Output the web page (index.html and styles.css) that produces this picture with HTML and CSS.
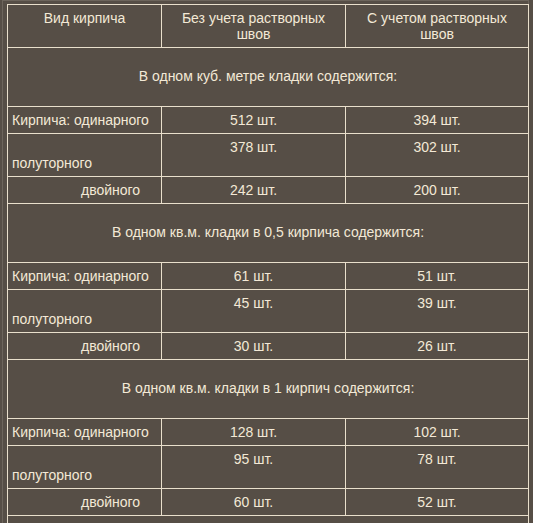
FILE: index.html
```html
<!DOCTYPE html>
<html lang="ru">
<head>
<meta charset="utf-8">
<title>Расход кирпича</title>
<link rel="stylesheet" href="styles.css">
</head>
<body>
<div class="frame">
<table class="bricks">
  <colgroup>
    <col class="c1">
    <col class="c2">
    <col class="c3">
  </colgroup>
  <tr class="head">
    <td>Вид кирпича</td>
    <td>Без учета растворных швов</td>
    <td>С учетом растворных швов</td>
  </tr>
  <tr><td class="section" colspan="3">В одном куб. метре кладки содержится:</td></tr>
  <tr><td class="label">Кирпича: одинарного</td><td>512 шт.</td><td>394 шт.</td></tr>
  <tr><td class="label"><br>полуторного</td><td>378 шт.</td><td>302 шт.</td></tr>
  <tr><td class="label indent">двойного</td><td>242 шт.</td><td>200 шт.</td></tr>

  <tr><td class="section" colspan="3">В одном кв.м. кладки в 0,5 кирпича содержится:</td></tr>
  <tr><td class="label">Кирпича: одинарного</td><td>61 шт.</td><td>51 шт.</td></tr>
  <tr><td class="label"><br>полуторного</td><td>45 шт.</td><td>39 шт.</td></tr>
  <tr><td class="label indent">двойного</td><td>30 шт.</td><td>26 шт.</td></tr>

  <tr><td class="section" colspan="3">В одном кв.м. кладки в 1 кирпич содержится:</td></tr>
  <tr><td class="label">Кирпича: одинарного</td><td>128 шт.</td><td>102 шт.</td></tr>
  <tr><td class="label"><br>полуторного</td><td>95 шт.</td><td>78 шт.</td></tr>
  <tr><td class="label indent">двойного</td><td>60 шт.</td><td>52 шт.</td></tr>

  <tr><td class="section" colspan="3">&nbsp;</td></tr>
</table>
</div>
</body>
</html>
```

FILE: styles.css
```css
html, body {
  margin: 0;
  padding: 0;
  background: #564e46;
}

body {
  font-family: "Liberation Sans", Arial, sans-serif;
  font-size: 14px;
  color: #f3e9d6;
}

.frame {
  margin-left: 2px;
  width: 527px;
  border-left: 1px solid #6d655c;
  border-top: 1px solid #6d655c;
  border-right: 1px solid #6d655c;
  padding: 3px 2px 0 4px;
  box-sizing: border-box;
}

.bricks {
  border-collapse: collapse;
  table-layout: fixed;
  width: 521px;
}

.c1 { width: 154px; }
.c2 { width: 184px; }
.c3 { width: 183px; }

.bricks td {
  border: 1px solid #e9dfcc;
  padding: 5px 4px;
  line-height: 16px;
  text-align: center;
  vertical-align: top;
}

.bricks td.section {
  padding: 20px 4px 22px;
}

.bricks td.label {
  text-align: left;
}

.bricks td.indent {
  padding-left: 73px;
}
```
